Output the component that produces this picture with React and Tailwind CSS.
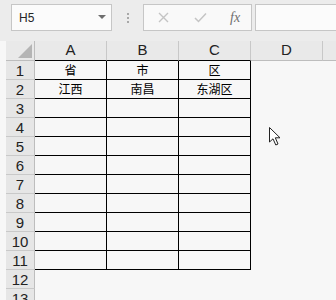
import React from 'react';

const cols = ['A', 'B', 'C', 'D'];
const data = [
    ['省', '市', '区'],
    ['江西', '南昌', '东湖区'],
];

function Cursor() {
    return (
        <svg className="absolute left-[268px] top-[126px]" width="14" height="21" viewBox="0 0 14 21">
            <path d="M1.5 1.5 L1.5 16 L5 12.8 L7.8 19 L10 18 L7.3 11.8 L12 11.8 Z" fill="#fff" stroke="#222" strokeWidth="1" strokeLinejoin="miter" />
        </svg>
    );
}

export default function App() {
    const rows = Array.from({ length: 13 }, (_, i) => i + 1);

    return (
        <div className="relative w-[336px] h-[300px] overflow-hidden bg-[#f7f7f7] text-black" style={{ fontFamily: '"Liberation Sans", Arial, sans-serif' }}>
            {/* formula bar */}
            <div className="h-[41px] bg-[#ececec] flex items-start pt-[4px]">
                <div className="ml-[11px] w-[101px] h-[27px] border border-[#c6c6c6] bg-[#fbfbfb] flex items-center pl-[7px] pr-[5px]">
                    <span className="text-[12px] text-[#262626] flex-1">H5</span>
                    <svg width="8" height="5" viewBox="0 0 8 5"><path d="M0 0 L8 0 L4 4 Z" fill="#6e6e6e" /></svg>
                </div>
                <div className="w-[31px] h-[27px] flex flex-col items-center justify-center gap-[2px]">
                    <div className="w-[2px] h-[2px] bg-[#a8a8a8]" />
                    <div className="w-[2px] h-[2px] bg-[#a8a8a8]" />
                    <div className="w-[2px] h-[2px] bg-[#a8a8a8]" />
                </div>
                <div className="w-[109px] h-[27px] border border-[#c6c6c6] bg-[#f9f9f9] flex items-center">
                    <svg className="ml-[14px]" width="11" height="11" viewBox="0 0 11 11">
                        <path d="M1 1 L10 10 M10 1 L1 10" stroke="#c4c4c4" strokeWidth="1.4" />
                    </svg>
                    <svg className="ml-[25px]" width="13" height="11" viewBox="0 0 13 11">
                        <path d="M1 6 L4.5 9.5 L12 1.5" stroke="#c4c4c4" strokeWidth="1.5" fill="none" />
                    </svg>
                    <span className="ml-[23px] text-[14px] italic text-[#6f6f6f]" style={{ fontFamily: '"Liberation Serif", serif' }}>fx</span>
                </div>
                <div className="ml-[3px] flex-1 h-[27px] border border-r-0 border-[#c6c6c6] bg-[#fbfbfb]" />
            </div>

            {/* column header */}
            <div className="flex h-[20px] pl-[6px]">
                <div className="w-[29px] h-[20px] bg-[#e9e9e9] border-r border-b border-[#bdbdbd] flex items-end justify-end pr-[2px] pb-[2px]">
                    <svg width="14" height="14" viewBox="0 0 14 14"><path d="M14 0 L14 14 L0 14 Z" fill="#b5b5b5" /></svg>
                </div>
                {cols.map((c, i) => (
                    <div key={c} className={`w-[72px] h-[20px] bg-[#e9e9e9] border-r border-[#c8c8c8] border-b flex items-center justify-center text-[15px] text-[#222] ${i < 3 ? 'border-b-black' : 'border-b-[#bdbdbd]'}`}>
                        {c}
                    </div>
                ))}
                <div className="flex-1 h-[20px] bg-[#e9e9e9] border-b border-[#bdbdbd]" />
            </div>

            {/* rows */}
            <div className="pl-[6px]">
                {rows.map((r) => (
                    <div key={r} className="flex h-[19px]">
                        <div className="w-[29px] h-[19px] bg-[#e6e6e6] border-r border-b border-[#c9c9c9] border-r-[#bdbdbd] flex items-center justify-center text-[15px] text-[#222] leading-none">
                            {r}
                        </div>
                        {[0, 1, 2].map((c) => (
                            <div
                                key={c}
                                className={`w-[72px] h-[19px] flex items-center justify-center text-[12px] ${r <= 11 ? 'border-r border-b border-black' : ''}`}
                                style={{ fontFamily: '"Noto Sans CJK SC", sans-serif' }}
                            >
                                {data[r - 1] ? data[r - 1][c] : ''}
                            </div>
                        ))}
                    </div>
                ))}
            </div>

            <Cursor />
        </div>
    );
}
